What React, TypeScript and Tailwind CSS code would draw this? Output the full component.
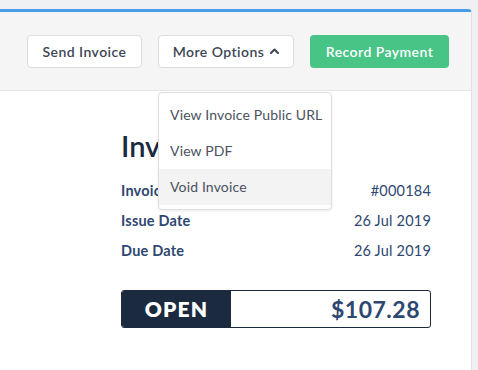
import React from 'react';

function ChevronUp() {
  return (
    <svg width="9" height="6" viewBox="0 0 9 6" className="ml-1.5">
      <path d="M1 5 L4.5 1.5 L8 5" fill="none" stroke="currentColor" strokeWidth="2" strokeLinecap="round" strokeLinejoin="round" />
    </svg>
  );
}

export default function App() {
  const rows = [
    { label: 'Invoice Number', value: '#000184' },
    { label: 'Issue Date', value: '26 Jul 2019' },
    { label: 'Due Date', value: '26 Jul 2019' },
  ];

  return (
    <div className="w-[478px] h-[370px] bg-[#eff0f4] pt-[9px] overflow-hidden" style={{ fontFamily: 'Lato, "Open Sans", sans-serif' }}>
      <div className="w-[472px] h-[361px] bg-white border-t-[3px] border-t-[#4a9de8] border-r border-r-[#dfe1e6] rounded-tr-[4px] flex flex-col">
        {/* header */}
        <div className="relative h-[79px] bg-[#f5f5f5] border-b border-[#e5e5e5] flex items-center pl-[27px] gap-4">
          <button className="h-[33px] w-[115px] bg-white border border-[#dcdcdc] rounded-[4px] text-[14px] font-semibold text-[#3c4656] tracking-[0.45px]">
            Send Invoice
          </button>
          <div className="relative">
            <button className="h-[33px] w-[136px] justify-center bg-white border border-[#dcdcdc] rounded-[4px] text-[14px] font-semibold text-[#3c4656] flex items-center tracking-[0.45px]">
              More Options
              <ChevronUp />
            </button>
            <div className="absolute left-0 top-[57px] w-[174px] bg-white border border-[#dedede] rounded-[4px] shadow-[0_1px_3px_rgba(0,0,0,0.08)] py-[4px] z-10">
              <div className="h-[36px] flex items-center pl-[11px] text-[14px] text-[#4a5160] tracking-[0.15px]">View Invoice Public URL</div>
              <div className="h-[36px] flex items-center pl-[11px] text-[14px] text-[#4a5160] tracking-[0.15px]">View PDF</div>
              <div className="h-[36px] flex items-center pl-[11px] text-[14px] text-[#4a5160] tracking-[0.15px] bg-[#f3f3f3]">Void Invoice</div>
            </div>
          </div>
          <button className="h-[33px] w-[139px] bg-[#48c486] rounded-[4px] text-[14px] font-semibold text-white tracking-[0.45px]">
            Record Payment
          </button>
        </div>

        {/* body */}
        <div className="pl-[121px] pr-[40px] pt-[37px]">
          <h1 className="text-[29px] font-semibold text-[#1b2a41] leading-[36px]">Invoice</h1>
          <div className="mt-[17px] flex flex-col gap-[10px]">
            {rows.map((r) => (
              <div key={r.label} className="flex justify-between items-center h-[20px] text-[14.5px] tracking-[0.2px]">
                <span className="font-bold text-[#2e4770]">{r.label}</span>
                <span className="text-[#2e4770]">{r.value}</span>
              </div>
            ))}
          </div>
          <div className="mt-[29px] h-[38px] flex border border-[#1b2a3f] rounded-[3px] overflow-hidden">
            <div className="w-[109px] bg-[#1b2a3f] text-white font-extrabold text-[21px] tracking-[1.2px] flex items-center justify-center">
              OPEN
            </div>
            <div className="flex-1 flex items-center justify-end pr-[10px] text-[23px] font-bold text-[#2e4770] tracking-[0.5px]">
              $107.28
            </div>
          </div>
        </div>
      </div>
    </div>
  );
}
